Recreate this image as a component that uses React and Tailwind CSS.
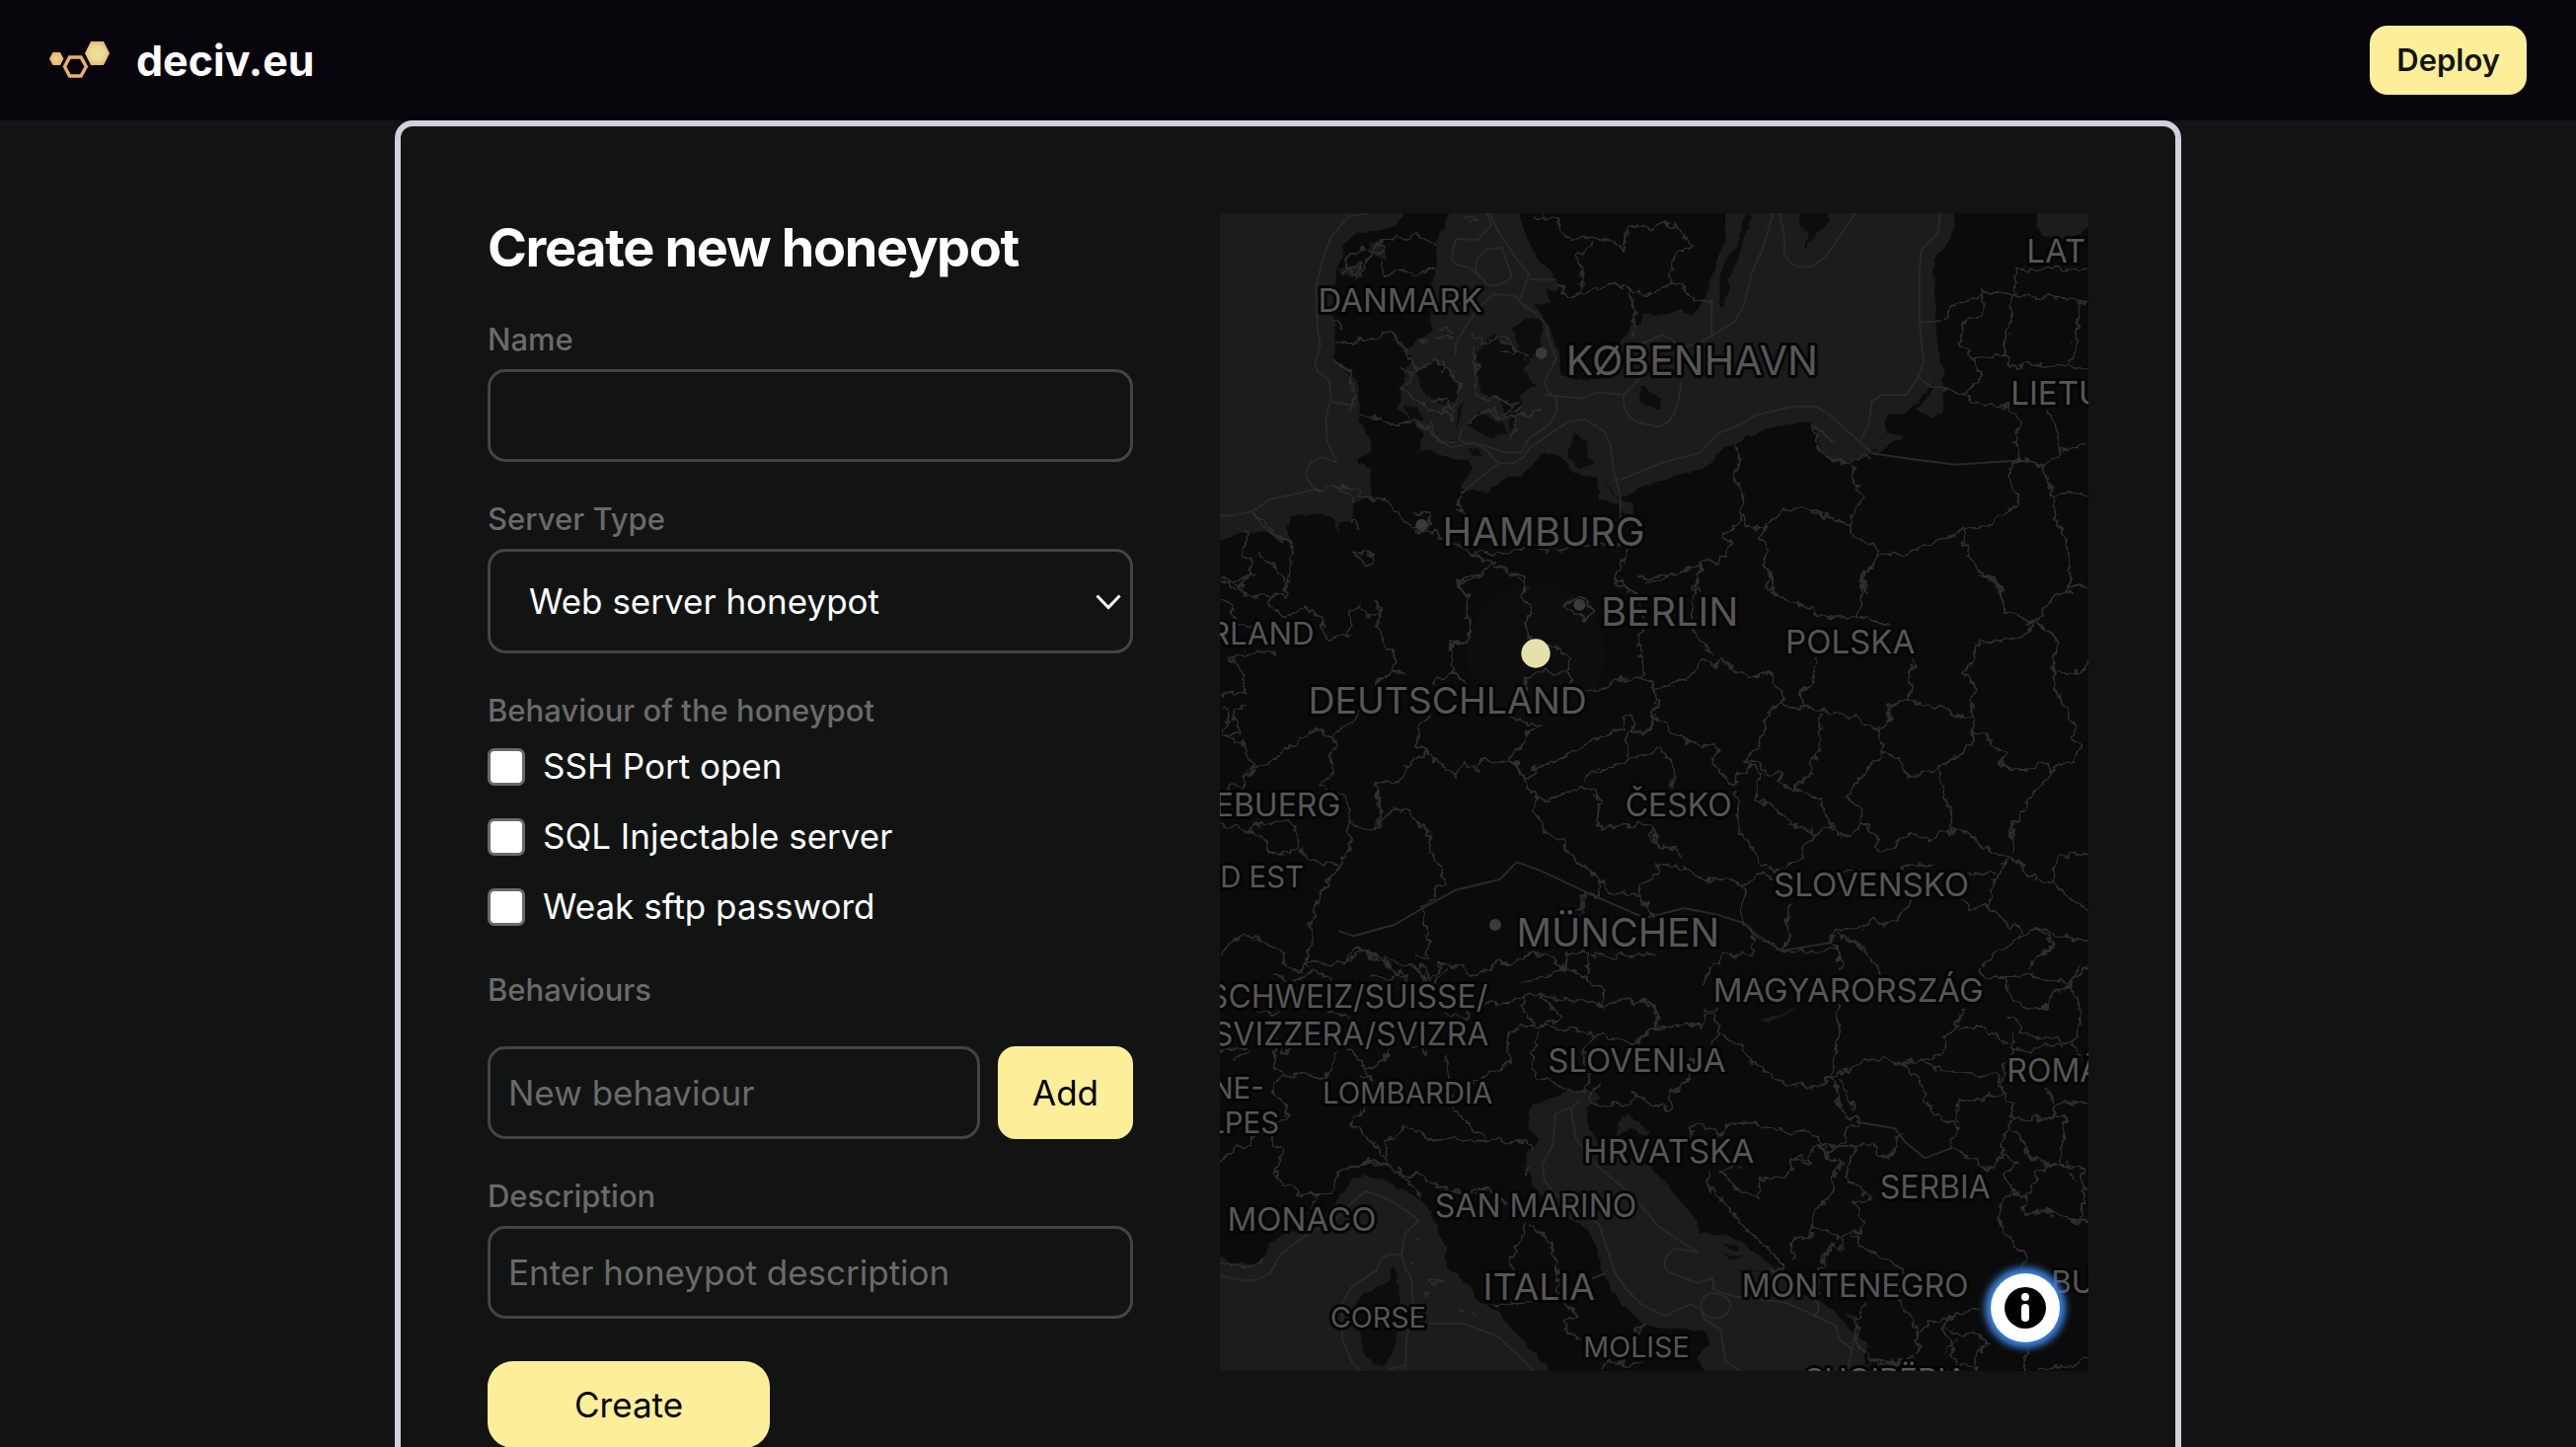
import React, { useState } from 'react';

const serverTypes = ['Web server honeypot', 'Database honeypot', 'Mail server honeypot'];

const defaultBehaviours = ['SSH Port open', 'SQL Injectable server', 'Weak sftp password'];

const north = {
  water: [
    'M20 20H615L590 85L540 100L465 108L430 140L415 190L400 235L395 290V360L400 440L395 495L430 530L465 560L470 610V665L490 710L512 745L510 775L470 790L472 812L508 820V910L455 925L450 985L415 985L403 1020L395 975L350 960L265 970L250 1010L265 1050L225 1045L190 1015L110 1018L20 1060Z',
    'M738 20L735 90L715 110L703 150L708 215L692 260L690 350L695 400L660 430L600 465L635 490L610 530L600 600L585 640L640 690L665 720L655 765L645 773L690 770L720 785L805 800L810 830L780 885L820 885L865 900L910 855L960 845L1035 775L1080 785L1110 820L1150 850L1190 850L1205 920L1260 930L1270 960L1305 965V930L1240 900L1210 860L1250 905L1290 905L1320 885L1420 850L1525 820L1550 800L1585 755L1620 748L1690 710L1770 688L1850 686L1865 735L1880 780L1910 802H1970L2010 790L2028 775L2055 745L2072 710L2075 660L2140 655L2190 600L2225 545L2235 500L2225 400L2218 300L2220 230L2227 180L2275 120L2280 20H1585L1582 130L1555 200L1525 310L1485 360L1450 345L1410 355H1332V385L1300 390L1262 440V500L1240 545L1130 555L1085 540L1075 460L1050 400L1020 350L1010 320L1055 325L1040 285L1075 280L1060 235L1020 195L985 130L965 75L960 20Z',
    'M2525 20L2535 95L2555 125H2620L2665 110L2700 85V20Z',
    'M2235 500L2250 530L2248 660L2210 668L2165 645L2205 600Z',
    'M2075 710L2130 725L2060 770L2030 778Z',
    'M500 140L545 130L550 190L520 180ZM410 215L470 205L490 240L440 240Z',
  ],
  land: [
    'M645 530L700 495L740 520L775 570L770 620L730 632L670 600Z',
    'M825 480L880 410L905 450L960 460L940 400L985 365L1025 375L1030 400L1015 470L970 520L1005 575L960 600L965 650L930 710L900 610L840 595Z',
    'M800 690L830 655L900 680L920 720L860 732Z',
    'M1330 570L1390 615L1380 645L1325 620Z',
    'M1110 760L1130 715L1160 740L1170 790L1190 805L1140 825L1110 790Z',
    'M1810 20L1815 85L1840 115L1820 158L1870 100L1900 70V20Z',
    'M1650 20L1620 150L1590 180L1568 250V330H1582L1605 220L1630 160L1665 55Z',
    'M805 765L830 760L845 785L820 788Z',
    'M605 630L640 640L670 675L630 680Z',
    'M765 700L775 640L790 610L780 660Z',
  ],
  sea: [
    'M500 48L440 58L385 120L360 190L340 270L345 400L353 450L337 505L345 530L380 555L386 600L370 680L375 745L403 805L360 790Q315 800 310 840Q315 870 340 887L200 918L145 955L90 967H48',
    'M386 622L460 632M145 955L180 1000L240 1050',
    'M868 48L890 95L945 180L988 232L958 315L1005 350L1040 385L1045 425L1070 490L1035 560L1045 590L1070 610L1073 650L1050 690L985 735L965 775H915L820 745L750 760L700 725L690 680',
    'M860 48L873 85L830 130L765 125L752 185L765 205L805 212L840 245',
    'M860 157L905 153L935 240Q905 275 860 265L825 220L830 185Z',
    'M765 480V445L800 385L830 340L880 293L945 300L985 345',
    'M988 250H1070M1035 600L1085 605L1145 610L1195 592L1275 600L1330 545',
    'M780 900L895 808H940L970 790L990 760L1110 680L1160 675L1215 710L1235 750L1245 830L1265 905V1000',
    'M775 735L800 750L820 745L860 770L895 808M775 735L785 700',
    'M1265 858L1395 805L1505 778L1560 718L1620 695L1680 660L1795 635H1860L1900 660L1990 740L2028 775',
    'M1275 600Q1270 660 1320 685L1380 697Q1430 690 1445 600L1450 560',
    'M1320 450L1390 418L1420 430L1450 458L1510 440L1610 380L1640 330L1665 230L1700 150L1730 48',
    'M1543 310V418M1750 48L1765 130L1762 170Q1790 225 1850 208L1890 180L1930 120L1980 48',
    'M2238 48L2230 110L2180 160L2175 220V380L2187 500L2170 548L2135 600H2060L2030 620L2020 690L1995 740',
    'M2175 380L2240 375M2170 548L2210 575L2260 580',
    'M2028 778L2170 798L2285 812L2475 800',
  ],
  borders: [
    'M400 440L480 435L520 430L560 410L600 440L620 480L650 520',
    'M410 235L450 215L430 190L490 150M470 250L500 180L540 130L600 125L650 115L705 140M540 190L545 240L600 220L650 235L700 210',
    'M430 200L460 240L480 200L440 220M500 150L530 180L550 150L520 140M790 60L830 75L800 85',
    'M395 370L420 400M400 500L440 530L460 600L445 650',
    'M470 665L540 670L565 690L610 685L640 680L690 710L715 745L770 745',
    'M600 520L640 540L600 580L640 610L680 640L740 660L760 640L730 620L690 620',
    'M700 500L740 520L775 570L770 620L730 640L760 680M640 530L700 495M730 500L720 540',
    'M720 400L760 405M650 430L680 440M700 430L760 420M810 410L840 440L880 430L920 420L940 460L980 480M900 440L950 460L930 480L900 460',
    'M820 460L830 520L820 590L850 620L900 600L930 640L960 610M840 660L880 640L900 680L960 660L1015 650M800 690L860 640L890 670L960 640L930 750',
    'M340 887L400 880L440 905L460 925M400 880L450 885L500 915L555 918L600 975L640 1005L700 1020L780 1060L830 1090L880 1115L930 1140L975 1170V1200',
    'M640 970L690 955L680 1000L650 1020M450 980L470 1005M450 1075L515 1085L510 1120L480 1110Z',
    'M820 1075L900 1085L1000 1055L1080 1080L1200 1050L1285 1060L1280 1110L1250 1135V1170L1290 1200',
    'M790 890L770 930L795 980L780 1010M880 1115L830 1150L770 1170L785 1200',
    'M145 955L170 985L240 1040L268 1050V1120L245 1200M130 1020L120 1090L150 1110L140 1150L90 1165M160 1080L200 1110L245 1165',
    'M48 1165L100 1195',
    'M1005 60L1070 65L1105 130L1180 125L1240 130L1275 165L1285 100L1320 85L1360 95L1400 80L1440 90L1485 155L1450 160L1420 200V265L1350 300L1320 290L1245 260L1150 290L1110 305L1070 260',
    'M1145 290L1150 240L1130 180L1180 145M1420 265L1450 270L1490 310L1543 315M1295 280L1310 350L1305 430',
    'M1610 755L1630 800L1615 850L1640 900L1635 970L1655 1000L1705 1003L1725 985L1770 950L1820 945L1880 970L1960 988',
    'M1635 970L1610 1010L1575 1015L1605 1050L1565 1105L1510 1110L1450 1140L1380 1160L1340 1175',
    'M1705 1003L1690 1035L1710 1070L1700 1120L1725 1150V1200M1510 1110L1500 1200',
    'M1850 690L1915 740M1850 700L1870 770L1910 800L1970 803L2028 785M1975 810L1970 870L2010 905L1980 950L1960 988L1975 1030L2030 1050L2045 1085H2130L2160 1070L2240 1045L2310 1012L2380 995L2465 940L2470 905L2435 840L2475 800L2520 805L2550 825L2570 870L2575 905L2590 980L2630 1090L2635 1200',
    'M2045 1085L2030 1130L2000 1145L2005 1200M2305 1012L2320 1080L2370 1150L2420 1180L2425 1200',
    'M2250 370L2280 335L2360 300L2365 288L2450 295L2510 300L2530 310L2570 300L2640 310L2688 320',
    'M2365 300V350L2310 380L2295 440L2340 490L2360 545L2310 600M2450 295L2455 350L2440 430L2430 480L2340 490M2430 480L2465 520L2520 505L2560 520L2620 500L2650 520L2688 530',
    'M2660 320L2655 400L2640 480L2630 500M2465 290L2475 220L2560 215L2688 215',
    'M2260 580L2310 600L2370 635L2440 630L2485 690L2460 740L2475 800M2560 650L2590 690L2600 770L2688 755M2600 770L2550 825M2575 905L2688 900',
  ],
  labels: [
    { text: 'DANMARK', x: 596, y: 347, size: 'text-[99px]' },
    { text: 'KØBENHAVN', x: 1483, y: 540, size: 'text-[123px]' },
    { text: 'HAMBURG', x: 1032, y: 1058, size: 'text-[120px]' },
    { text: 'LAT', x: 2500, y: 197, size: 'text-[99px]', anchor: 'start' },
    { text: 'LIETU', x: 2452, y: 630, size: 'text-[99px]', anchor: 'start' },
  ],
  cities: [[1025, 473], [661, 995]],
};

const middle = {
  water: [],
  land: [],
  sea: ['M410 1090L455 1105L580 1070L665 1020L765 965L900 932L950 880L1020 905L1190 985L1340 1050L1460 1020L1560 1040L1640 1065L1670 1095L1755 1150L1905 1125'],
  borders: [
    'M48 20L110 35L120 70L245 72L255 0M110 35L150 0M48 75L80 100L100 150L160 165M190 70L210 110L250 130L320 110L360 140L370 200L440 190L445 120L475 100L490 130L540 130L520 90L540 110L525 170L555 220L580 260L575 295L520 340',
    'M80 260L130 245L210 240M80 260L120 310L125 360L85 370M125 400L85 435L110 490L60 495M50 375L90 360M60 410L80 450L50 490M48 495L115 515L130 560L155 590L200 580L240 545L345 475L400 515L385 560L390 610L350 650L430 680L450 730L440 780L445 820L420 885L355 965L320 1075L325 1110L312 1190L320 1200',
    'M155 590L120 620V660L80 640L50 680M400 510L400 480L440 460L470 420M50 765L140 785L150 770L240 755L275 760L285 830L240 860L200 850L180 810L145 785M285 840L320 870L410 892',
    'M770 30L800 80V130L815 180L805 205L745 215L760 300L800 345M770 30L850 10M930 0L975 20L970 95L990 105L980 180L1000 210L1080 230L1110 265L1100 300L1000 310L975 320V370M1110 300V345L1170 360L1230 350L1245 325L1330 320',
    'M575 295L620 315M760 300L715 320L700 350M690 440L655 460L645 525L680 545L760 620L790 580L830 605L850 560L880 580L935 575L965 610L985 630L1000 595L1050 580L1100 555L1160 520L1280 470L1270 440L1310 440L1305 480L1320 485',
    'M680 545L625 580L590 640H520L530 700L540 760L500 790L440 760M540 770L565 720L630 730L650 770L680 780L690 850L720 900L730 950L705 960L700 990L665 1010L670 1070L680 1100V1170L640 1165',
    'M920 435L975 455L1030 465L980 480V520L940 545L935 570L965 600L980 650L1020 690L1005 725L1040 790L1085 820L1140 885L1200 930V980L1150 975L1145 1020L1120 1045',
    'M1020 690L1080 680L1150 650L1180 665L1200 690L1195 770L1260 770L1360 765L1380 830M1150 640L1180 610L1300 565L1380 535L1430 590L1425 655',
    'M1245 0L1250 20L1320 70M1320 10L1350 20L1415 10M1320 70L1330 160L1320 260L1335 310L1330 320L1370 355L1375 390L1360 470L1340 485L1290 485L1280 520L1300 560',
    'M1330 320L1370 355L1450 330L1490 300L1505 265L1550 285L1570 265L1620 300L1650 320L1725 305L1735 350L1760 370V405L1735 405L1700 450L1685 530L1640 570L1660 590L1625 620L1610 645L1595 640L1545 575L1570 535L1550 520L1510 525L1420 490L1405 450L1370 445L1345 480',
    'M1505 0L1485 70V170L1500 210L1550 250M1715 0V50L1770 85L1830 105L1880 130L1920 140L1980 130L2000 60L2005 0M1975 130L2040 150L2090 165M1860 260L1850 340L1810 370L1820 405L1760 410M1820 405L1880 420L1930 430L1980 440L2000 465L2050 480L2060 550L2110 560L2135 620H2170L2240 590L2290 560L2340 510L2335 430L2340 340L2305 300L2340 270L2345 215L2440 205L2490 195L2525 155',
    'M2160 265L2165 285L2140 295L2150 340L2140 380L2080 405L2085 450L2045 480M2140 380L2180 405L2240 410L2290 440L2335 430',
    'M2360 10L2400 20L2440 120L2510 145L2525 155L2560 95L2635 50V0M2525 155L2590 200L2580 290L2595 370L2650 470L2640 490L2660 530L2645 575L2600 585L2540 645L2455 770L2465 850M2590 300L2650 310L2688 275M2635 40L2688 45',
    'M1880 430L1870 520L1880 540L1850 570V610L1800 640L1795 665L1740 640L1760 605L1710 610L1680 580L1640 570M1660 590L1695 610L1680 640L1675 695L1720 700L1790 770L1850 780L1860 800L1820 825L1810 870L1780 885L1750 910L1680 880L1670 840L1625 790L1615 660',
    'M1795 665L1875 690L1885 730L1915 770M1860 800L1890 775H1915L1930 800L1960 795L2000 755L1995 715L1950 680L2000 620L2030 580L2065 560M2000 755L2040 800L2050 845L2095 840L2110 810L2150 795L2210 820L2240 790L2275 790L2330 795L2370 840L2440 865L2485 885L2500 920L2580 945V890L2600 860L2688 855M2240 590V640L2260 710L2275 790',
    'M2340 495L2380 490L2395 525L2440 550L2420 580L2450 600H2500L2550 580L2580 605M2440 865L2410 930L2385 970L2380 1015L2330 1025L2310 995M2380 1015L2420 1045L2450 1075L2500 1095L2530 1080L2580 1100L2688 1120M2580 945L2640 1000L2688 1025M2490 1100L2440 1145L2400 1160L2365 1200M2530 1085L2590 1130L2540 1160L2510 1200',
    'M1360 770V820L1440 840L1450 870M1380 885L1370 930L1320 950L1330 980H1290L1230 975L1200 930M1330 980L1360 1050M1370 885L1450 895L1540 940L1590 930L1645 955L1640 1000L1632 1030L1650 1065L1670 1095L1665 1160L1580 1160L1555 1190',
    'M1645 955L1680 915L1740 930M1785 1000L1770 1060L1780 1110L1755 1150L1870 1155L1920 1140L1905 1100L1930 1085L2000 1080L2030 1050L2060 1075L2120 1045L2150 1000M1920 1100L1990 1130L2060 1220M1920 1140L1940 1200M1670 1100L1755 1150',
    'M2120 900L2150 885L2210 895M2320 910L2360 920L2410 910M1940 910L2010 900',
    'M48 1160L110 1100L180 1120L240 1160L250 1200L290 1215L320 1185L380 1190L430 1180L460 1140L510 1160L600 1190L660 1200L690 1240L720 1190L770 1195L830 1225L890 1190L970 1180L980 1160L1060 1165L1090 1210L1100 1160L1160 1150L1170 1220M440 1180L480 1150L540 1180L600 1230M1170 1160L1240 1170L1380 1155',
    'M1100 100L1140 65L1160 80L1190 120L1160 140L1120 125Z',
  ],
  labels: [
    { text: 'RLAND', x: 335, y: 220, size: 'text-[94px]', anchor: 'end' },
    { text: 'DEUTSCHLAND', x: 740, y: 428, size: 'text-[112px]' },
    { text: 'BERLIN', x: 1415, y: 163, size: 'text-[120px]' },
    { text: 'POLSKA', x: 1964, y: 247, size: 'text-[99px]' },
    { text: 'EBUERG', x: 415, y: 742, size: 'text-[96px]', anchor: 'end' },
    { text: 'ČESKO', x: 1442, y: 742, size: 'text-[96px]' },
    { text: 'ND EST', x: 303, y: 958, size: 'text-[88px]', anchor: 'end' },
    { text: 'MÜNCHEN', x: 1258, y: 1137, size: 'text-[118px]' },
    { text: 'SLOVENSKO', x: 2028, y: 985, size: 'text-[99px]' },
  ],
  cities: [[1141, 98], [885, 1071]],
};

const south = {
  water: [
    'M20 875L95 900L150 905L185 880L195 840L245 810L300 790L400 720L415 690L450 650L485 630L560 655L620 685L650 705L690 740L705 790L735 850V920L770 930L820 985L830 1015L890 1040L925 1090L970 1130L1010 1180L1040 1210L1080 1260H20Z',
    'M1100 380L1165 370L1210 395L1165 430V470L1190 530L1260 560L1320 600L1350 600L1430 690L1500 770L1505 805L1570 812L1630 830L1690 880L1740 915L1790 985L1865 1010L1920 1050L1960 1100L2010 1140V1200L2000 1260H1535L1500 1190L1535 1140L1530 1115L1480 1100L1380 1095L1340 1090L1320 1070L1270 1030L1240 980L1215 930L1190 850L1165 795L1110 760L1060 720L1005 675L985 620L980 560L1000 550L1020 520L990 495L985 440L1010 415L1060 395Z',
    'M1270 450L1290 448L1350 500L1340 515L1300 490L1250 515Z',
    'M1690 160L1760 140L1810 115L1770 145L1710 168Z',
    'M1950 1055L1985 1055L1980 1080Z',
  ],
  land: [
    'M575 905L590 930V990L595 1020L580 1120L575 1170L545 1215L490 1185L485 1140L465 1100L460 1030L480 995L540 965L565 945Z',
    'M1570 840L1620 845L1625 860L1590 858ZM1575 870L1650 880L1600 885ZM1600 912L1700 925L1640 920Z',
  ],
  sea: [
    'M48 938L120 952H155L200 930L235 870L300 820L400 765L450 715L490 680L560 705L620 745L652 770L610 810L600 870L610 910L630 945L635 1020L615 1130L612 1225',
    'M600 878Q570 860 535 890L525 920L450 970L420 1020V1130L450 1200L475 1225M680 1082H785L890 1120L960 1185L1000 1225M560 1222L610 1210',
    'M1115 425L1068 445L1060 540L1028 600L1035 650L1070 690L1140 740L1200 780L1250 930L1280 975L1330 1025L1400 1060L1440 1040L1480 1025L1510 1040L1520 1070L1570 1100L1585 1200L1630 1225',
    'M1140 405L1115 430L1130 520L1190 600L1300 690L1340 740L1385 790L1460 840L1500 865L1430 855Q1380 890 1410 925L1500 960L1545 945L1550 980L1610 1000L1700 1010L1770 1020L1860 1060L1920 1090L1930 1130L1970 1160L1955 1225',
    'M1510 1035Q1510 990 1555 990Q1600 1000 1600 1030Q1590 1070 1545 1065Q1515 1060 1510 1035M1180 945L1220 930M1970 1160L1985 1080',
    'M1985 470L2100 490L2130 530L2190 580L2270 550',
  ],
  borders: [
    'M48 255L90 250L130 240M90 285L140 250M210 235L215 290L240 330L210 355V380L250 420L255 465L200 490L205 530L240 560L220 620L240 660L300 690L375 690L400 640L410 620L480 600L540 595L620 640L650 625L700 660L790 690L870 675L920 720M240 330L320 320L370 345L385 290L400 260',
    'M440 245L480 290L500 340L485 390L490 440L450 450L455 485L490 510L555 590L560 530L600 490L655 495L680 525L750 525L830 530L900 525L985 530L1000 550M490 310L530 300L560 250M740 270L735 340L760 430L830 500L860 525M620 240L660 240L680 265M520 350L480 330',
    'M48 585L90 555L145 540L140 515L180 500M280 690L340 695L320 740M480 600L520 585L545 600M590 600L590 630L650 680L660 700',
    'M220 20L260 50L330 10L380 30L370 60M500 20L560 40L600 10L620 40L590 70M640 0L690 60L740 0M740 145L800 150L820 120M160 130L210 145L230 130M370 130L430 145L440 180M220 200L240 270L270 240',
    'M850 110L900 112L970 90L1020 80L1100 100L1180 100L1215 125L1240 100L1310 105L1370 115L1380 180L1310 230L1190 205L1130 190L1020 180L960 180L920 210L935 270L905 310L860 325L820 350',
    'M960 50L1060 20L1090 0L1160 30L1220 70L1205 115M960 90L975 130L1010 180L1050 170L1080 150L1060 120L1020 85M1010 190L1015 240L995 255L1005 330L1060 350L1100 375L1160 380L1175 330M1190 205L1150 250L1170 320M1200 350L1170 400L1210 420L1290 415L1310 385L1370 420L1420 430L1420 380L1470 340V300L1520 240',
    'M985 640L980 600M980 780L960 830L935 880L940 940M990 780L1050 830L1070 890L1080 950L1070 990L1110 1030L1140 1070L1095 1080L1100 1105L1150 1135M880 1030L930 1020L1010 1010',
    'M50 895L100 905L130 915L180 885M645 825L655 832M630 905L640 908M680 955L700 945L720 960L690 965M665 985L680 993M700 1040L710 1045M785 1030L795 1045M815 1050L825 1060',
    'M1210 1225L1220 1195L1290 1210L1330 1200M1310 1110L1340 1080',
    'M1320 215L1370 185L1440 180L1500 170L1520 185V140L1550 135L1565 200L1630 240L1660 285L1710 320L1770 360L1860 365L1900 335L1960 310L2010 280L2070 280L2120 290L2180 285L2240 260L2270 190L2310 125M1370 185L1375 130L1350 100L1320 105M1520 60L1540 0M1520 130L1560 120M1565 205L1545 215V240',
    'M1930 110L1925 230L1910 290L1915 350L1935 430L1990 470L1950 490L1950 530L1900 550L1870 520L1820 490L1780 500L1720 490L1650 470L1600 470L1565 510L1500 470L1475 490L1480 530M1930 340L1980 440',
    'M1570 510L1550 540M1530 610L1535 670L1590 730L1640 790L1690 830L1740 880L1755 915L1720 920M1575 615L1640 610M1570 620L1630 680L1685 700L1690 640L1760 645L1790 610L1785 580L1840 600L1850 550L1880 540L1890 580L1920 540L1960 545L2040 535L2045 570L2080 585L2100 530L2120 500',
    'M1980 545L1950 640L2000 680L2025 710L1970 715L2010 780L1990 810L1970 800L1920 820L1850 780L1845 750L1910 690L1905 640L1940 600L1930 580L1900 590L1870 540M1850 780L1840 820L1790 825L1795 890M1940 820L1940 860L1915 840L1885 870V910L1860 930L1870 1020L1855 1060M1970 810L2020 860L2070 890L2130 920L2110 1010L2150 1060L2170 1110L2165 1180',
    'M2120 290L2185 350L2190 410L2250 470L2290 480L2270 550L2330 580L2390 620L2430 570L2470 600L2430 630L2455 680L2500 700L2485 730L2500 750L2560 740L2640 770L2688 775M2180 285L2220 310L2280 320L2360 330L2410 320L2425 380L2370 400L2290 410L2285 470M2425 380L2455 420L2460 465L2440 490L2420 550L2430 570',
    'M2455 680L2410 730L2430 800L2500 880L2480 915M2010 1020L1985 1080L1980 1130L2020 1190L2080 1200L2160 1190M2165 1110L2210 1080L2250 1070L2245 1110L2280 1150L2270 1190L2350 1225M2250 1070L2290 1050L2360 1040M2250 1090L2300 1120L2360 1110L2380 1150L2340 1190L2350 1225M2280 1130L2250 1170',
    'M2365 0L2360 30L2440 30L2510 20L2550 40L2610 40L2640 70L2660 120L2670 150L2640 230L2540 210L2480 200L2465 150L2440 150M2440 30V80L2490 120L2560 120L2570 90L2640 50L2660 0M2460 200V260L2430 300L2425 380M2460 240L2510 260L2550 240L2640 230L2660 280M2290 180H2370L2440 235M2640 40L2688 0',
    'M2460 465L2540 460L2620 450L2610 520V600L2570 600L2530 620L2510 690L2485 705M2455 490L2490 530L2500 570L2560 600M2590 415L2580 460M2590 415L2688 405M2560 360L2580 410M2610 600L2670 610L2675 770M2630 620L2660 650M2535 1220L2640 1210L2688 1190M2500 1160L2495 1225',
    'M1990 1225L2030 1195L2060 1210L2120 1200M1785 590L1810 570L1850 600',
  ],
  labels: [
    { text: 'SCHWEIZ/SUISSE/', x: 862, y: 122, size: 'text-[96px]', anchor: 'end' },
    { text: 'SVIZZERA/SVIZRA', x: 865, y: 238, size: 'text-[96px]', anchor: 'end' },
    { text: 'NE-', x: 182, y: 400, size: 'text-[88px]', anchor: 'end' },
    { text: 'LPES', x: 228, y: 503, size: 'text-[88px]', anchor: 'end' },
    { text: 'LOMBARDIA', x: 618, y: 413, size: 'text-[88px]' },
    { text: 'SLOVENIJA', x: 1315, y: 318, size: 'text-[99px]' },
    { text: 'MAGYARORSZÁG', x: 1958, y: 105, size: 'text-[99px]' },
    { text: 'ROMÂ', x: 2440, y: 347, size: 'text-[96px]', anchor: 'start' },
    { text: 'HRVATSKA', x: 1412, y: 595, size: 'text-[99px]' },
    { text: 'SERBIA', x: 2222, y: 702, size: 'text-[96px]' },
    { text: 'SAN MARINO', x: 1008, y: 760, size: 'text-[96px]' },
    { text: 'MONACO', x: 297, y: 800, size: 'text-[99px]' },
    { text: 'ITALIA', x: 1018, y: 1012, size: 'text-[112px]' },
    { text: 'CORSE', x: 529, y: 1095, size: 'text-[86px]' },
    { text: 'MONTENEGRO', x: 1979, y: 1002, size: 'text-[96px]' },
    { text: 'MOLISE', x: 1314, y: 1185, size: 'text-[86px]' },
    { text: 'BU', x: 2575, y: 990, size: 'text-[94px]', anchor: 'start' },
    { text: 'SHQIPËRIA', x: 2072, y: 1288, size: 'text-[94px]' },
  ],
  cities: [],
};

const Band = ({ band, offset }) => (
  <g transform={`translate(-48 ${offset})`}>
    <g fill="#1b1b1d" filter="url(#coast)">
      {band.water.map((d) => <path key={d} d={d} />)}
    </g>
    <g fill="#0b0b0b" filter="url(#coast)">
      {band.land.map((d) => <path key={d} d={d} />)}
    </g>
    <g fill="none" stroke="#292929" strokeWidth="6" strokeLinejoin="round">
      {band.sea.map((d) => <path key={d} d={d} />)}
    </g>
    <g fill="none" stroke="#2e2e2e" strokeWidth="6" strokeLinejoin="round" filter="url(#jagged)">
      {band.borders.map((d) => <path key={d} d={d} />)}
    </g>
    {band.cities.map(([cx, cy]) => <circle key={cx} cx={cx} cy={cy} r="18" fill="#3a3a3a" />)}
  </g>
);

const BandLabels = ({ band, offset }) => (
  <g transform={`translate(-48 ${offset})`}>
    {band.labels.map((label) => (
      <text
        key={label.text}
        x={label.x}
        y={label.y}
        textAnchor={label.anchor || 'middle'}
        className={label.size}
        fill="#565656"
        stroke="#050505"
        strokeWidth="18"
        strokeLinejoin="round"
        paintOrder="stroke"
      >
        {label.text}
      </text>
    ))}
  </g>
);

const ServerMap = () => (
  <div className="relative self-start">
    <svg viewBox="0 0 2640 3519" className="block w-full overflow-hidden bg-[#0b0b0b]" role="img" aria-label="Server location">
      <defs>
        <filter id="jagged" filterUnits="userSpaceOnUse" x="0" y="-40" width="2740" height="1320">
          <feTurbulence type="fractalNoise" baseFrequency="0.035" numOctaves="2" seed="4" />
          <feDisplacementMap in="SourceGraphic" scale="36" xChannelSelector="R" yChannelSelector="G" />
        </filter>
        <filter id="coast" filterUnits="userSpaceOnUse" x="0" y="0" width="2740" height="1320">
          <feTurbulence type="fractalNoise" baseFrequency="0.03" numOctaves="2" seed="9" />
          <feDisplacementMap in="SourceGraphic" scale="20" xChannelSelector="R" yChannelSelector="G" />
        </filter>
      </defs>
      <Band band={north} offset={-48} />
      <Band band={middle} offset={1092} />
      <Band band={south} offset={2292} />
      <circle cx="960" cy="1338" r="212" fill="#ffffff" fillOpacity="0.012" />
      <circle cx="960" cy="1338" r="44" fill="#e6e1ab" />
      <BandLabels band={north} offset={-48} />
      <BandLabels band={middle} offset={1092} />
      <BandLabels band={south} offset={2292} />
    </svg>
    <button
      type="button"
      aria-label="Map information"
      className="absolute right-[29px] bottom-[29px] flex size-[70px] items-center justify-center rounded-full bg-white shadow-[0_0_7px_6px_#3b82e0]"
    >
      <svg viewBox="0 0 42 42" className="size-[42px]">
        <circle cx="21" cy="21" r="21" fill="#000" />
        <circle cx="21" cy="10" r="4" fill="#fff" />
        <rect x="17" y="17" width="8" height="18" rx="4" fill="#fff" />
      </svg>
    </button>
  </div>
);

const Logo = () => (
  <svg viewBox="0 0 62 38" className="h-[38px] w-[62px]" aria-hidden="true">
    <defs>
      <radialGradient id="honey">
        <stop offset="0" stopColor="#ebe4a2" />
        <stop offset="0.6" stopColor="#ecd893" />
        <stop offset="1" stopColor="#eab877" />
      </radialGradient>
      <radialGradient id="honeySmall">
        <stop offset="0" stopColor="#eed08b" />
        <stop offset="1" stopColor="#eab473" />
      </radialGradient>
    </defs>
    <path d="M0 17.5L3.5 11H11L14.5 17.5L11 24H3.5Z" fill="url(#honeySmall)" />
    <path d="M42 0H55L61 12L55 24H42L36 12Z" fill="url(#honey)" />
    <path d="M20.5 16H32L37.3 25.5L32 35H20.5L15.5 25.5Z" fill="none" stroke="#eab06e" strokeWidth="3.4" />
  </svg>
);

const fieldClass =
  'h-[94px] w-full min-w-0 rounded-[18px] border-3 border-[#444] bg-transparent px-[18px] text-[35px] text-white placeholder:text-[#6a6a6a] outline-none focus:border-[#fdef99]';
const labelClass = 'text-[31px] leading-[45px] font-medium text-[#6a6a6a]';

const App = () => {
  const [name, setName] = useState('');
  const [type, setType] = useState(serverTypes[0]);
  const [behaviours, setBehaviours] = useState(defaultBehaviours);
  const [newBehaviour, setNewBehaviour] = useState('');
  const [description, setDescription] = useState('');

  const addBehaviour = () => {
    if (!newBehaviour.trim()) return;
    setBehaviours([...behaviours, newBehaviour.trim()]);
    setNewBehaviour('');
  };

  return (
    <div className="flex h-screen flex-col bg-[#121413] font-['Inter','Liberation_Sans',sans-serif] text-white">
      <header className="flex shrink-0 items-center justify-between bg-[#07050b] px-[50px] py-[26px]">
        <a href="#" className="flex items-center gap-[26px]">
          <Logo />
          <span className="text-[43px] leading-[53px] font-bold">deciv.eu</span>
        </a>
        <button type="button" className="h-[70px] rounded-[18px] bg-[#fdef99] px-[27px] text-[31px] font-semibold text-[#121413]">
          Deploy
        </button>
      </header>

      <main className="flex-1 overflow-y-auto [scrollbar-width:none]">
        <div className="mx-auto grid w-full max-w-[1810px] grid-cols-[327fr_440fr] gap-[88px] rounded-[18px] border-6 border-[#d1d1db] p-[88px]">
          <form className="flex flex-col gap-[35px]" onSubmit={(e) => e.preventDefault()}>
            <h1 className="text-[54px] leading-[70px] font-bold tracking-tight">Create new honeypot</h1>

            <div className="flex flex-col gap-2">
              <label htmlFor="name" className={labelClass}>Name</label>
              <input id="name" type="text" className={fieldClass} value={name} onChange={(e) => setName(e.target.value)} />
            </div>

            <div className="flex flex-col gap-2">
              <label htmlFor="type" className={labelClass}>Server Type</label>
              <div className="relative">
                <select
                  id="type"
                  value={type}
                  onChange={(e) => setType(e.target.value)}
                  className="block h-[106px] w-full appearance-none rounded-[18px] border-3 border-[#444] bg-[#121413] px-[39px] text-[35px] text-white outline-none"
                >
                  {serverTypes.map((t) => <option key={t}>{t}</option>)}
                </select>
                <svg viewBox="0 0 26 16" className="pointer-events-none absolute top-[46px] right-3 h-4 w-[26px]" fill="none" stroke="#fff" strokeWidth="3">
                  <path d="M1.5 1.5L13 13.5L24.5 1.5" />
                </svg>
              </div>
            </div>

            <fieldset>
              <legend className={labelClass}>Behaviour of the honeypot</legend>
              <div className="mt-2 flex flex-col gap-[18px]">
                {behaviours.map((behaviour) => (
                  <label key={behaviour} className="flex items-center gap-[18px] text-[35px] leading-[53px]">
                    <input
                      type="checkbox"
                      className="size-[38px] shrink-0 appearance-none rounded-[7px] border-3 border-[#6a6a6a] bg-white checked:bg-[#fdef99]"
                    />
                    {behaviour}
                  </label>
                ))}
              </div>
            </fieldset>

            <label htmlFor="behaviour" className={labelClass}>Behaviours</label>
            <div className="flex gap-[18px]">
              <input
                id="behaviour"
                type="text"
                placeholder="New behaviour"
                className={fieldClass}
                value={newBehaviour}
                onChange={(e) => setNewBehaviour(e.target.value)}
              />
              <button type="button" onClick={addBehaviour} className="rounded-[18px] bg-[#fdef99] px-[35px] text-[35px] text-black">
                Add
              </button>
            </div>

            <div className="flex flex-col gap-2">
              <label htmlFor="description" className={labelClass}>Description</label>
              <input
                id="description"
                type="text"
                placeholder="Enter honeypot description"
                className={fieldClass}
                value={description}
                onChange={(e) => setDescription(e.target.value)}
              />
            </div>

            <button type="submit" className="mt-2 h-[88px] self-start rounded-[26px] bg-[#fdef99] px-[88px] text-[35px] text-black">
              Create
            </button>
          </form>

          <ServerMap />
        </div>
      </main>
    </div>
  );
};

export default App;
